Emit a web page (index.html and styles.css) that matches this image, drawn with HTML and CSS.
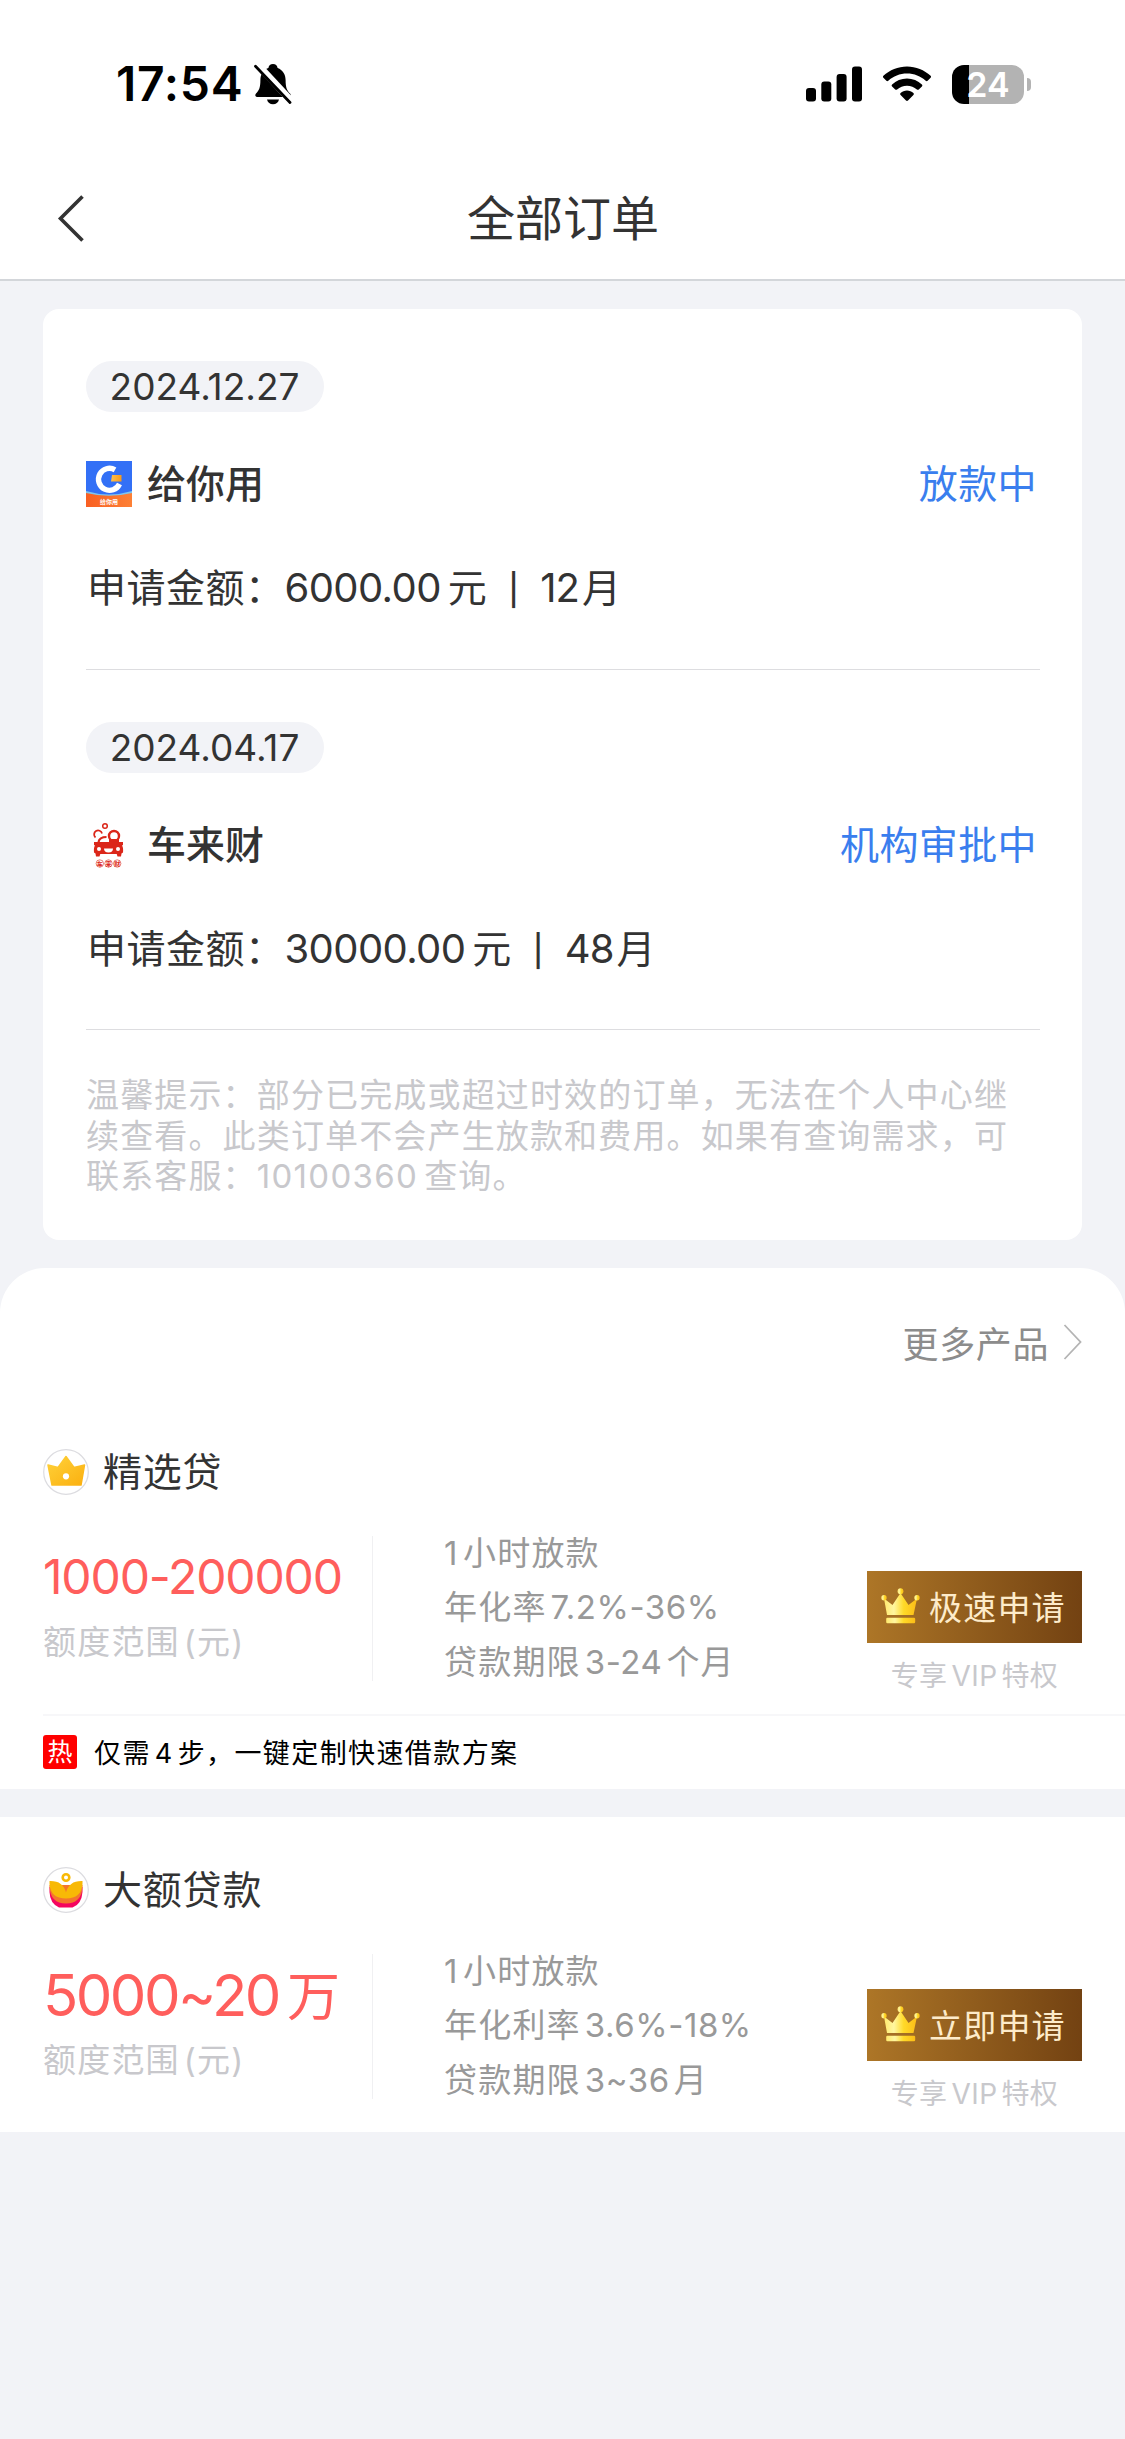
FILE: index.html
```html
<!DOCTYPE html>
<html lang="zh-CN">
<head>
<meta charset="utf-8">
<title>全部订单</title>
<link rel="stylesheet" href="styles.css">
</head>
<body>
<header class="top">
  <div class="status">
    <div class="status-left">
      <span class="clock">17:54</span>
      <svg class="bell" width="38" height="42" viewBox="0 0 38 42">
        <path d="M19 1c2.6 0 4.200 1.600 4.600 4 5.200 2 8 6.500 8 12 0 8 1.500 10.500 4.400 13.500 1.400 1.600.8 3.500-1.500 3.500H3.500C1.200 34 .6 32.100 2 30.500 4.900 27.500 6.400 25 6.400 17c0-5.500 2.800-10 8-12C14.800 2.600 16.400 1 19 1z"/>
        <path d="M13 36.500h12c-.6 3-3 4.800-6 4.800s-5.400-1.800-6-4.800z"/>
        <path d="M3.500 1.500L37 37.500" stroke="#fff" stroke-width="7"/>
        <path d="M1.500 3.200L36 39.500" stroke="#000" stroke-width="2.800" stroke-linecap="round"/>
      </svg>
    </div>
    <div class="status-right">
      <svg width="56" height="36" viewBox="0 0 56 36">
        <rect x="0" y="22" width="10" height="13.500" rx="3"/>
        <rect x="15.300" y="15.500" width="10" height="20" rx="3"/>
        <rect x="30.600" y="8" width="10" height="27.500" rx="3"/>
        <rect x="46" y=".5" width="10" height="35" rx="3"/>
      </svg>
      <svg width="50" height="36" viewBox="0 0 50 36">
        <path d="M25 0.500c9 0 17.300 3.500 23.600 9.300.6.600.6 1.400 0 2l-3 3c-.5.500-1.300.5-1.900 0C38.700 10.200 32.200 7.600 25 7.600S11.300 10.200 6.300 14.800c-.6.5-1.400.5-1.900 0l-3-3c-.6-.6-.6-1.400 0-2C7.700 4 16 .5 25 .5z"/>
        <path d="M25 12.600c5.700 0 10.900 2.200 14.900 5.800.6.5.6 1.400 0 2l-3.100 3c-.5.500-1.300.5-1.900.1C32.200 21.200 28.800 19.800 25 19.800s-7.200 1.400-9.900 3.700c-.6.4-1.400.4-1.900-.1l-3.100-3c-.6-.6-.6-1.500 0-2 4-3.600 9.200-5.800 14.900-5.800z"/>
        <path d="M25 24.600c2.500 0 4.700.9 6.400 2.400.6.500.6 1.400 0 1.900l-5.400 5.600c-.6.600-1.400.6-2 0l-5.400-5.600c-.6-.5-.6-1.400 0-1.900 1.700-1.500 3.900-2.400 6.400-2.400z"/>
      </svg>
      <div class="battery"><div class="cell"><span>24</span></div><i></i></div>
    </div>
  </div>
  <nav class="nav">
    <svg width="28" height="48" viewBox="0 0 28 48" fill="none" stroke="#333" stroke-width="3.600"><path d="M25.500 2.500L3.500 24.500 25.500 46.500"/></svg>
    <h1>全部订单</h1>
    <span class="nav-end"></span>
  </nav>
</header>

<section class="orders">
  <article class="order">
    <time class="date">2024.12.27</time>
    <div class="row">
      <svg class="logo" width="46" height="46" viewBox="0 0 46 46">
        <defs><linearGradient id="og" x1="0" x2="1"><stop offset="0" stop-color="#f95f22"/><stop offset="1" stop-color="#fd8035"/></linearGradient>
        <linearGradient id="yg" x1="0" x2="1"><stop offset="0" stop-color="#ffc04c"/><stop offset="1" stop-color="#f79a1c"/></linearGradient></defs>
        <path fill="#3370f6" d="M0 0h46v46H0z"/>
        <path fill="#7fc5ef" d="M0 30q23 7 46 0v5H0z"/>
        <path fill="url(#og)" d="M0 32q23 5.500 46 0v14H0z"/>
        <path d="M29 8.800A11 11 0 1 0 33.500 23" fill="none" stroke="#fff" stroke-width="5.400"/>
        <path fill="url(#yg)" d="M26 14h9.500v6.500H25z"/>
        <text class="logo-text" x="23" y="43" text-anchor="middle" fill="#fff">给你用</text>
      </svg>
      <h2>给你用</h2>
      <span class="state">放款中</span>
    </div>
    <p class="amount">申请金额：<b>6000.00</b>元<i>|</i><b class="months">12</b>月</p>
  </article>
  <article class="order">
    <time class="date">2024.04.17</time>
    <div class="row">
      <svg class="logo" width="46" height="46" viewBox="0 0 46 46">
        <g fill="none" stroke="#db2619">
          <circle cx="19" cy="4" r="2.300" stroke-width="1.500"/>
          <path d="M9.500 15.500a4 4 0 1 1 6.500-4" stroke-width="1.800"/>
          <path d="M12.500 20q1-5 8-5" stroke-width="2.200"/>
          <circle cx="28" cy="14" r="5" stroke-width="2.400"/>
        </g>
        <g fill="#db2619">
          <path d="M23 17h10v4H23zM8 20h29v3l-1 .5q1.500 2 1 7l-1.500 1-.5 3h-3.500l-.8-2.500H14.300l-.8 2.500H10l-.5-3-1.500-1q-.5-5 1-7L8 23z"/>
          <path fill="#fff" d="M18 26.500h9q0 4-4.500 4t-4.500-4z"/><circle fill="#fff" cx="13" cy="27" r="2"/><circle fill="#fff" cx="32" cy="27" r="2"/>
          <text class="logo-text car" x="23.800" y="43.600" text-anchor="middle">车来财</text>
        </g>
        <g fill="none" stroke="#db2619" stroke-width=".6"><circle cx="13.800" cy="41.500" r="3.700"/><circle cx="22.500" cy="41.500" r="3.700"/><circle cx="31.200" cy="41.500" r="3.700"/></g>
      </svg>
      <h2>车来财</h2>
      <span class="state">机构审批中</span>
    </div>
    <p class="amount">申请金额：<b>30000.00</b>元<i>|</i><b class="months">48</b>月</p>
  </article>
  <p class="tips">温馨提示：部分已完成或超过时效的订单，无法在个人中心继<br>续查看。此类订单不会产生放款和费用。如果有查询需求，可<br>联系客服：<b>10100360</b>查询。</p>
</section>

<main class="products">
  <a class="more">更多产品<svg width="19" height="36" viewBox="0 0 19 36" fill="none" stroke="#b4b4b4" stroke-width="1.800"><path d="M1.500 1L17.500 18 1.500 35"/></svg></a>
  <section class="product">
    <div class="head">
      <svg width="46" height="46" viewBox="0 0 46 46">
        <defs><linearGradient id="cg" x2="1" y2="1"><stop offset="0" stop-color="#ffd23a"/><stop offset="1" stop-color="#fbb010"/></linearGradient></defs>
        <circle cx="23" cy="23" r="22.300" fill="#fff" stroke="#dcdce0" stroke-width="1.200"/>
        <path fill="url(#cg)" stroke="url(#cg)" stroke-width="1.500" stroke-linejoin="round" d="M5 16l10 2.500L23 7.500l8 11L41.500 16 38 36H9z"/>
        <circle cx="23" cy="27.300" r="3.100" fill="#fff"/>
      </svg>
      <h3>精选贷</h3>
    </div>
    <div class="body">
      <div class="quota"><strong>1000-200000</strong><small>额度范围<b>(</b>元<b class="close">)</b></small></div>
      <ul class="facts">
        <li><b class="one">1</b>小时放款</li>
        <li>年化率<b>7.2%-36%</b></li>
        <li>贷款期限<b class="term">3-24</b>个月</li>
      </ul>
      <div class="apply">
        <a class="btn"><svg width="39" height="36" viewBox="0 0 39 36"><defs><linearGradient id="gold" x2="1"><stop offset="0" stop-color="#ffe96c"/><stop offset=".3" stop-color="#fff6a0"/><stop offset=".6" stop-color="#ffd928"/><stop offset="1" stop-color="#fcbc16"/></linearGradient></defs><g id="crown" fill="url(#gold)"><path d="M3 10.500l8.500 6.500 8-12 8 12 8.500-6.500-3.500 16.500H6z"/><circle cx="19.500" cy="3.200" r="2.900"/><circle cx="3" cy="9.800" r="2.700"/><circle cx="36" cy="9.800" r="2.700"/><rect x="5.200" y="29.800" width="29" height="5.400" rx="1.200"/></g></svg>极速申请</a>
        <span class="vip">专享<b>VIP</b>特权</span>
      </div>
    </div>
    <div class="promo"><span class="hot">热</span><span>仅需<b>4</b>步，一键定制快速借款方案</span></div>
  </section>
  <section class="product second">
    <div class="head">
      <svg width="46" height="46" viewBox="0 0 46 46">
        <circle cx="23" cy="23" r="22.300" fill="#fff" stroke="#dcdce0" stroke-width="1.200"/>
        <path fill="#f5055f" d="M6.500 20h33v5q-1 12.500-10 15.500H16q-9-4-9.500-15.500z"/>
        <path fill="#f4762d" d="M6.500 18h33v2q-1 16.500-16.500 16.500T6.500 20z"/>
        <path fill="#f8b906" d="M6.500 14Q20 13.500 23 25.500 26 13.500 39.500 14v3q-1 14.500-16.500 14.500T6.500 17z"/>
        <circle cx="23" cy="10.500" r="3.300" fill="#fff" stroke="#f8b906" stroke-width="2.600"/>
      </svg>
      <h3>大额贷款</h3>
    </div>
    <div class="body">
      <div class="quota"><strong class="big"><b>5000~20</b>万</strong><small>额度范围<b>(</b>元<b class="close">)</b></small></div>
      <ul class="facts">
        <li><b class="one">1</b>小时放款</li>
        <li>年化利率<b>3.6%-18%</b></li>
        <li>贷款期限<b class="term">3~36</b>月</li>
      </ul>
      <div class="apply">
        <a class="btn"><svg width="39" height="36" viewBox="0 0 39 36"><use href="#crown"/></svg>立即申请</a>
        <span class="vip">专享<b>VIP</b>特权</span>
      </div>
    </div>
  </section>
</main>
</body>
</html>
```
FILE: styles.css
```css
* { box-sizing: border-box; margin: 0; padding: 0; }
body {
  width: 1125px;
  min-height: 2439px;
  background: #f2f3f7;
  color: #333;
  font-family: Inter, "Noto Sans CJK SC", sans-serif;
}
b, i { font-weight: 400; font-style: normal; }
svg { display: block; flex: none; }

/* Status bar and navigation */
.top { height: 281px; background: #fff; border-bottom: 2px solid #d3d6da; }
.status { height: 168px; padding: 0 94px 0 116px; display: flex; justify-content: space-between; align-items: center; }
.status-left, .status-right { display: flex; align-items: center; }
.status-left { gap: 11px; }
.status-right { gap: 20px; }
.clock { font-size: 48px; font-weight: 600; line-height: 58px; color: #000; letter-spacing: 0.700px; }
.battery { display: flex; align-items: center; gap: 3px; }
.cell { width: 72px; height: 39px; border-radius: 12px; background: linear-gradient(90deg, #000 17px, #b3b3b3 17px); color: #fff; font-size: 34px; font-weight: 600; line-height: 39px; text-align: center; }
.battery i { width: 4px; height: 13px; border-radius: 0 4px 4px 0; background: #b3b3b3; }
.nav { height: 111px; padding: 0 56px 12px 57px; display: flex; align-items: center; justify-content: space-between; }
.nav h1 { padding-top: 3px; font-size: 48px; line-height: 60px; font-weight: 400; }
.nav-end { width: 28px; }

/* Orders card */
.orders { width: 1039px; height: 931px; margin: 28px 0 0 43px; padding: 0 42px 0 43px; border-radius: 16px; background: #fff; }
.order { height: 360.500px; padding-top: 52px; border-bottom: 1.500px solid #dddde0; }
.date { display: block; width: 238px; height: 51px; padding-right: 1px; border-radius: 26px; background: #f2f3f7; font-size: 37px; line-height: 51px; text-align: center; }
.row { display: flex; align-items: center; height: 46px; margin-top: 49px; }
.row h2 { margin-left: 15px; font-size: 39px; line-height: 46px; font-weight: 500; }
.state { margin-left: auto; padding-right: 3px; font-size: 39px; line-height: 46px; letter-spacing: 0.400px; color: #3a7eee; }
.amount { margin-top: 58px; font-size: 39px; line-height: 46px; letter-spacing: 0.500px; white-space: nowrap; padding-left: 1px; }
.amount b { font-size: 40px; margin-right: 7px; letter-spacing: -0.600px; }
.amount .months { margin-right: 3px; letter-spacing: -1px; }
.amount i { display: inline-block; width: 10px; margin: 0 22px 0 21px; font-size: 31px; line-height: 40px; font-weight: 500; text-align: center; vertical-align: 1px; }
.tips { margin-top: 45px; font-size: 33px; line-height: 40.500px; letter-spacing: 1.150px; color: #c8c8cc; white-space: nowrap; }
.tips b { margin-right: 6px; letter-spacing: 1.300px; }

/* Product list */
.products { margin-top: 28px; background: #fff; border-radius: 45px 45px 0 0; }
.more { display: flex; align-items: center; justify-content: flex-end; gap: 14px; height: 150px; padding: 0 43px 3px 0; font-size: 36px; color: #8c8c8c; letter-spacing: 0.600px; }
.product { padding: 31px 0 0 43px; height: 371px; }
.head { display: flex; align-items: center; height: 46px; }
.head h3 { margin-left: 14px; font-size: 39px; line-height: 46px; font-weight: 400; letter-spacing: 0.800px; }
.body { display: grid; grid-template-columns: 330px 1fr 215px; grid-template-rows: 145px; margin-top: 41px; padding-right: 43px; }
.quota { border-right: 1.500px solid #f0f0f2; display: flex; flex-direction: column; white-space: nowrap; }
.quota strong { height: 81px; font-size: 48px; line-height: 82px; font-weight: 400; letter-spacing: -1.150px; color: #ff5e5c; }
.quota .big { font-size: 53px; }
.big b { font-size: 58px; margin-right: 8px; letter-spacing: -2.500px; }
.quota small { font-size: 33px; line-height: 50px; letter-spacing: 1.200px; color: #c8c8cc; }
.quota small b { margin-left: 4px; }
.quota small .close { margin-left: 0; }
.facts { list-style: none; padding-left: 71px; font-size: 33px; line-height: 54.300px; letter-spacing: 1.200px; color: #999; white-space: nowrap; margin-top: -10px; }
.facts b { margin: 0 6px 0 4px; letter-spacing: 0.550px; }
.facts .one { margin: 0 5px 0 0; }
.facts .term { margin-right: 4px; }
.apply { display: flex; flex-direction: column; align-items: center; padding-top: 35px; }
.btn { width: 215px; height: 72px; flex: none; display: flex; align-items: center; gap: 9px; padding: 0 0 2px 14px; background: linear-gradient(90deg, #ad7627, #734212); color: #fdebca; font-size: 33px; letter-spacing: 1.200px; white-space: nowrap; }
.vip { margin-top: 13px; font-size: 28px; line-height: 40px; letter-spacing: 0.400px; color: #c8c8cc; white-space: nowrap; }
.vip b { margin: 0 4px; }
.promo { display: flex; align-items: center; height: 73px; margin-top: 33px; border-top: 2px solid #f7f7f9; color: #000; font-size: 27px; letter-spacing: 1.400px; }
.promo b { margin: 0 4px; }
.hot { width: 34px; height: 34px; margin-right: 17px; border-radius: 3px; background: #f00; color: #fff; font-size: 25px; line-height: 34px; text-align: center; letter-spacing: 0; }
.second { height: 343px; padding-top: 50px; border-top: 28px solid #f2f3f7; }
.logo-text { font-size: 6px; font-weight: 700; }
.car { font-size: 6px; letter-spacing: 2.700px; }
```
